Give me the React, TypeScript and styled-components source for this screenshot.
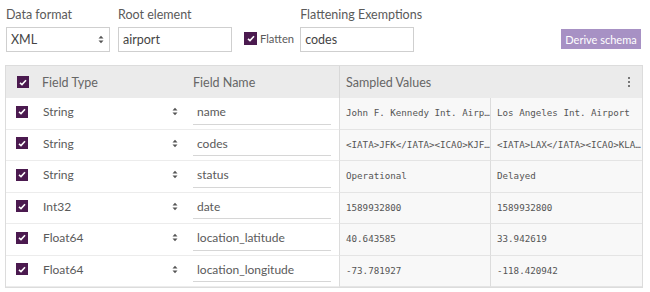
import React from "react";
import styled, { createGlobalStyle } from "styled-components";

const Global = createGlobalStyle`
  html, body { margin: 0; padding: 0; background: #fff; }
  body { font-family: Lato, "Open Sans", sans-serif; color: #444; }
  * { box-sizing: border-box; }
`;

const Page = styled.div`
  width: 650px;
  height: 292px;
  padding: 7px 7px 0 5px;
`;

const Controls = styled.div`
  display: flex;
  align-items: flex-end;
  height: 45px;
  padding-left: 1px;
`;

const Field = styled.div<{ $w: number; $ml?: number }>`
  display: flex;
  flex-direction: column;
  width: ${(p) => p.$w}px;
  margin-left: ${(p) => p.$ml ?? 0}px;
  flex: none;
`;

const Label = styled.div`
  font-size: 12.5px;
  color: #5a5a5a;
  height: 20px;
  line-height: 16px;
  white-space: nowrap;
`;

const Box = styled.div`
  height: 25px;
  border: 1px solid #cfcfcf;
  display: flex;
  align-items: center;
  padding: 0 5px 0 4px;
  font-size: 12.5px;
  color: #444;
  justify-content: space-between;
`;

const Check = styled.span<{ $size?: number }>`
  display: inline-flex;
  align-items: center;
  justify-content: center;
  width: ${(p) => p.$size ?? 12}px;
  height: ${(p) => p.$size ?? 12}px;
  background: #4b1a4f;
  flex: none;
`;

const FlattenWrap = styled.label`
  display: flex;
  align-items: center;
  gap: 3px;
  margin-left: 12px;
  height: 25px;
  font-size: 11.2px;
  color: #5a5a5a;
  padding-bottom: 2px;
  white-space: nowrap;
`;

const Button = styled.button`
  margin-left: auto;
  margin-right: 2px;
  margin-bottom: 3px;
  height: 20px;
  width: 80px;
  border: none;
  background: #a791c4;
  color: #fff;
  font-family: Lato, sans-serif;
  font-size: 11px;
  padding: 0;
`;

const Table = styled.div`
  margin-top: 13px;
  width: 638px;
  border: 1px solid #dcdcdc;
`;

const HeaderRow = styled.div`
  display: grid;
  grid-template-columns: 30px 150px 153px 1fr;
  height: 32px;
  background: #ebebeb;
  align-items: center;
  font-size: 12.5px;
  color: #666;
`;

const Row = styled.div`
  display: grid;
  grid-template-columns: 30px 150px 153px 151px 1fr;
  height: 31.5px;
  align-items: stretch;
  font-size: 12px;
  color: #5a5a5a;
`;

const CheckCell = styled.div`
  display: flex;
  align-items: center;
  justify-content: center;
  padding-left: 2px;
  padding-bottom: 3px;
  border-bottom: 1px solid #ececec;
`;

const TypeCell = styled.div`
  display: flex;
  align-items: center;
  justify-content: space-between;
  padding: 0 8px 3px 7px;
  border-bottom: 1px solid #ececec;
`;

const NameCell = styled.div`
  display: flex;
  align-items: stretch;
  padding: 0 8px 4px 7px;
  border-bottom: 1px solid #ececec;
`;

const NameInput = styled.div`
  flex: 1;
  display: flex;
  align-items: center;
  padding: 2px 0 0 4px;
  border-bottom: 1px solid #d6d6d6;
`;

const SampleCell = styled.div`
  background: #f8f8f8;
  border-left: 1px solid #dcdcdc;
  border-bottom: 1px solid #e4e4e4;
  display: flex;
  align-items: center;
  padding: 0 4px 1px 6px;
  font-family: "DejaVu Sans Mono", "Liberation Mono", monospace;
  font-size: 9.2px;
  color: #555;
  white-space: nowrap;
  overflow: hidden;
  min-width: 0;
`;

const HeadCell = styled.div<{ $pl?: number; $border?: boolean }>`
  height: 100%;
  display: flex;
  align-items: center;
  padding-left: ${(p) => p.$pl ?? 0}px;
  border-left: ${(p) => (p.$border ? "1px solid #d8d8d8" : "none")};
  justify-content: space-between;
`;

const Kebab = styled.span`
  display: flex;
  flex-direction: column;
  gap: 2px;
  margin-right: 12px;
  & > i {
    width: 2px;
    height: 2px;
    background: #777;
    display: block;
  }
`;

const Tick = () => (
  <svg width="8" height="7" viewBox="0 0 8 7">
    <path d="M1 3.8 L3 5.6 L7 1.2" stroke="#fff" strokeWidth="1.6" fill="none" />
  </svg>
);

const UpDown = () => (
  <svg width="6" height="9" viewBox="0 0 6 9">
    <path d="M0.5 3.5 L3 0.8 L5.5 3.5 Z M0.5 5.5 L3 8.2 L5.5 5.5 Z" fill="#555" />
  </svg>
);

const rows = [
  ["String", "name", "John F. Kennedy Int. Airp…", "Los Angeles Int. Airport"],
  ["String", "codes", "<IATA>JFK</IATA><ICAO>KJF…", "<IATA>LAX</IATA><ICAO>KLA…"],
  ["String", "status", "Operational", "Delayed"],
  ["Int32", "date", "1589932800", "1589932800"],
  ["Float64", "location_latitude", "40.643585", "33.942619"],
  ["Float64", "location_longitude", "-73.781927", "-118.420942"],
];

export default function App() {
  return (
    <Page>
      <Global />
      <Controls>
        <Field $w={104}>
          <Label>Data format</Label>
          <Box>
            <span>XML</span>
            <UpDown />
          </Box>
        </Field>
        <Field $w={114} $ml={8}>
          <Label>Root element</Label>
          <Box>airport</Box>
        </Field>
        <FlattenWrap>
          <Check $size={13}>
            <Tick />
          </Check>
          Flatten
        </FlattenWrap>
        <Field $w={114} $ml={6}>
          <Label>Flattening Exemptions</Label>
          <Box>codes</Box>
        </Field>
        <Button>Derive schema</Button>
      </Controls>
      <Table>
        <HeaderRow>
          <HeadCell $pl={11}>
            <Check $size={12}>
              <Tick />
            </Check>
          </HeadCell>
          <HeadCell $pl={6}>Field Type</HeadCell>
          <HeadCell $pl={7}>Field Name</HeadCell>
          <HeadCell $pl={6} $border>
            Sampled Values
            <Kebab>
              <i />
              <i />
              <i />
            </Kebab>
          </HeadCell>
        </HeaderRow>
        {rows.map(([t, n, a, b]) => (
          <Row key={n}>
            <CheckCell>
              <Check $size={12}>
                <Tick />
              </Check>
            </CheckCell>
            <TypeCell>
              <span>{t}</span>
              <UpDown />
            </TypeCell>
            <NameCell>
              <NameInput>{n}</NameInput>
            </NameCell>
            <SampleCell>{a}</SampleCell>
            <SampleCell>{b}</SampleCell>
          </Row>
        ))}
      </Table>
    </Page>
  );
}
